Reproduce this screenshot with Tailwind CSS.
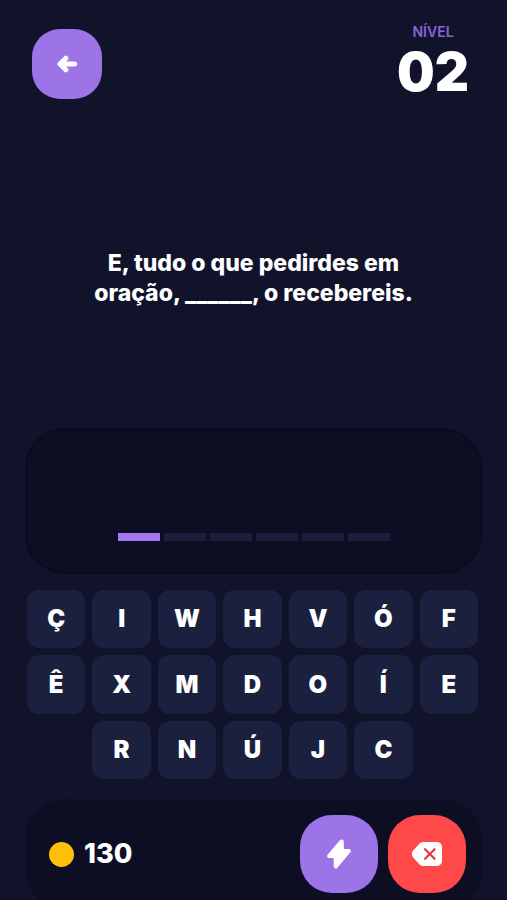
<!doctype html>
<html lang="pt-BR">

<head>
    <meta charset="UTF-8">
    <meta name="viewport" content="width=device-width, initial-scale=1.0">
    <title>Nível 02</title>
    <script src="https://cdn.jsdelivr.net/npm/@tailwindcss/browser@4"></script>
</head>

<body class="bg-[#11132b]">
    <div class="w-full h-screen overflow-hidden flex flex-col text-white font-['Inter','Open_Sans',sans-serif]">

        <header class="shrink-0 h-32 pl-8 pr-[38px] flex justify-between items-center">
            <button type="button" aria-label="Voltar"
                class="size-[70px] rounded-[28px] bg-[#9d73e8] flex items-center justify-center cursor-pointer">
                <svg class="w-5 h-[18px]" viewBox="0 0 20 18" fill="none" stroke="white" stroke-width="5"
                    stroke-linecap="round" stroke-linejoin="round">
                    <path d="M8.800 3.200 3 9l5.800 5.800M4 9h13.500" />
                </svg>
            </button>
            <div class="flex flex-col items-center pb-1">
                <span class="text-sm leading-5 font-semibold text-[#8c62d9]">NÍVEL</span>
                <span class="text-[53px] leading-[60px] font-black">02</span>
            </div>
        </header>

        <main class="flex-1 shrink-0 min-h-[300px] px-16 flex items-center justify-center">
            <p class="text-center text-[23px] leading-[30px] font-extrabold">E, tudo o que pedirdes em<br>oração,
                ______, o recebereis.</p>
        </main>

        <!-- answer slots -->
        <div
            class="shrink-0 h-[146px] mx-[25px] rounded-[40px] border-2 border-[#090b1e] bg-[#0d0e23] flex items-end justify-center gap-1 pb-[31px]">
            <span class="w-[42px] h-2 bg-[#a477ef]"></span>
            <span class="w-[42px] h-2 bg-[#1b1b3b]"></span>
            <span class="w-[42px] h-2 bg-[#1b1b3b]"></span>
            <span class="w-[42px] h-2 bg-[#1b1b3b]"></span>
            <span class="w-[42px] h-2 bg-[#1b1b3b]"></span>
            <span class="w-[42px] h-2 bg-[#1b1b3b]"></span>
        </div>

        <!-- letters -->
        <div class="shrink-0 mt-4 pl-[27px] pr-[29px] grid grid-cols-7 gap-[7px] text-2xl font-black">
            <button type="button" class="aspect-square rounded-xl bg-[#1b203f] cursor-pointer">Ç</button>
            <button type="button" class="aspect-square rounded-xl bg-[#1b203f] cursor-pointer">I</button>
            <button type="button" class="aspect-square rounded-xl bg-[#1b203f] cursor-pointer">W</button>
            <button type="button" class="aspect-square rounded-xl bg-[#1b203f] cursor-pointer">H</button>
            <button type="button" class="aspect-square rounded-xl bg-[#1b203f] cursor-pointer">V</button>
            <button type="button" class="aspect-square rounded-xl bg-[#1b203f] cursor-pointer">Ó</button>
            <button type="button" class="aspect-square rounded-xl bg-[#1b203f] cursor-pointer">F</button>
            <button type="button" class="aspect-square rounded-xl bg-[#1b203f] cursor-pointer">Ê</button>
            <button type="button" class="aspect-square rounded-xl bg-[#1b203f] cursor-pointer">X</button>
            <button type="button" class="aspect-square rounded-xl bg-[#1b203f] cursor-pointer">M</button>
            <button type="button" class="aspect-square rounded-xl bg-[#1b203f] cursor-pointer">D</button>
            <button type="button" class="aspect-square rounded-xl bg-[#1b203f] cursor-pointer">O</button>
            <button type="button" class="aspect-square rounded-xl bg-[#1b203f] cursor-pointer">Í</button>
            <button type="button" class="aspect-square rounded-xl bg-[#1b203f] cursor-pointer">E</button>
            <button type="button" class="col-start-2 aspect-square rounded-xl bg-[#1b203f] cursor-pointer">R</button>
            <button type="button" class="aspect-square rounded-xl bg-[#1b203f] cursor-pointer">N</button>
            <button type="button" class="aspect-square rounded-xl bg-[#1b203f] cursor-pointer">Ú</button>
            <button type="button" class="aspect-square rounded-xl bg-[#1b203f] cursor-pointer">J</button>
            <button type="button" class="aspect-square rounded-xl bg-[#1b203f] cursor-pointer">C</button>
        </div>

        <!-- coins and actions -->
        <footer
            class="shrink-0 mt-5 mx-[25px] pl-6 pr-4 py-4 rounded-[40px] bg-[#0d0e23] flex items-center justify-between">
            <div class="flex items-center gap-2.5">
                <span class="size-[25px] rounded-full bg-[#ffc107]"></span>
                <span class="text-[27px] leading-8 font-extrabold">130</span>
            </div>
            <div class="flex gap-2.5">
                <button type="button" aria-label="Dica"
                    class="size-[78px] rounded-[32px] bg-[#9d73e8] flex items-center justify-center cursor-pointer">
                    <svg class="w-6 h-[30px]" viewBox="0 0 24 30" fill="white" stroke="white" stroke-width="3"
                        stroke-linejoin="round">
                        <path d="M14.3 2 1.7 16.8c-.2.3 0 .7.4.7h6.1v10l.8.6L22.2 12.3c.2-.3 0-.7-.4-.7h-6.5V2.4z" />
                    </svg>
                </button>
                <button type="button" aria-label="Apagar"
                    class="size-[78px] rounded-[32px] bg-[#ff4848] flex items-center justify-center cursor-pointer">
                    <svg class="w-[30px] h-6" viewBox="0 0 30 24">
                        <path
                            d="M11.5 0H25a5 5 0 0 1 5 5v14a5 5 0 0 1-5 5H11.5c-1.6 0-2.8-.5-3.900-1.600L1.400 15.700c-2-2.300-2-5.100 0-7.400l6.200-6.700C8.700.5 9.900 0 11.500 0z"
                            fill="white" />
                        <path d="m13 7.200 9.600 9.600m0-9.600L13 16.800" stroke="#e8383f" stroke-width="2.200"
                            stroke-linecap="round" />
                    </svg>
                </button>
            </div>
        </footer>
    </div>
</body>

</html>
